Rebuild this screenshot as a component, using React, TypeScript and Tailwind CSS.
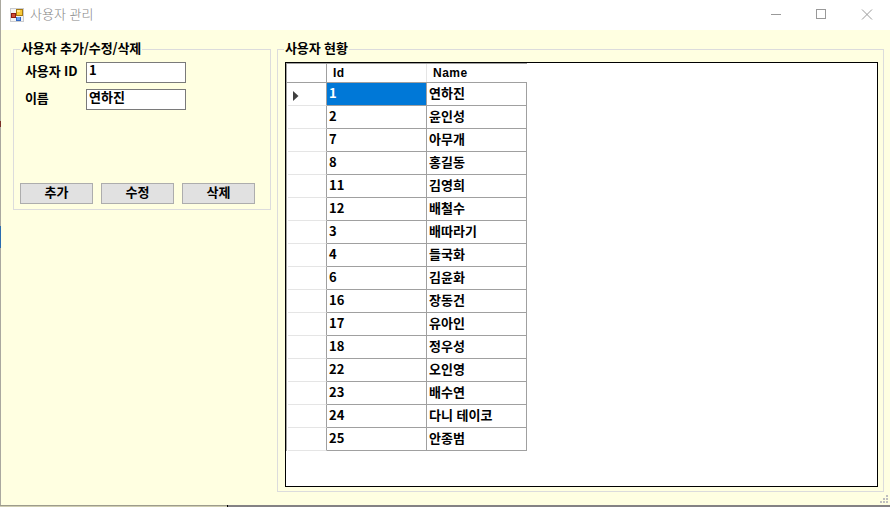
import React from "react";

const users: [number, string][] = [
  [1, "연하진"],
  [2, "윤인성"],
  [7, "아무개"],
  [8, "홍길동"],
  [11, "김영희"],
  [12, "배철수"],
  [3, "배따라기"],
  [4, "들국화"],
  [6, "김윤화"],
  [16, "장동건"],
  [17, "유아인"],
  [18, "정우성"],
  [22, "오인영"],
  [23, "배수연"],
  [24, "다니 테이코"],
  [25, "안종범"],
];

function FormIcon() {
  return (
    <svg width="14" height="14" viewBox="0 0 14 14" shapeRendering="crispEdges">
      <rect width="14" height="14" fill="#c9cbd0" />
      <rect x="1" y="1" width="12" height="12" fill="#f4f4f4" />
      <rect x="1" y="5" width="5" height="5" fill="#8c1a12" />
      <rect x="2" y="6" width="3" height="3" fill="#cf4a35" />
      <rect x="6" y="1" width="7" height="7" fill="#a87a10" />
      <rect x="7" y="2" width="5" height="5" fill="#f8c93a" />
      <rect x="7" y="2" width="3" height="2" fill="#ffe48a" />
      <rect x="6" y="9" width="5" height="4" fill="#3569c4" />
      <rect x="7" y="9" width="3" height="3" fill="#6ba0ee" />
    </svg>
  );
}

function TitleBar() {
  return (
    <header className="flex h-[30px] items-center bg-white pl-[9px] pr-[17px]">
      <FormIcon />
      <span className="-mt-[2px] ml-[6px] grow text-[13px] font-light leading-[18px] text-[#858585]">
        사용자 관리
      </span>
      <svg width="102" height="12" viewBox="0 0 102 12" fill="none" stroke="#999999">
        <path d="M0 5.5h10" />
        <rect x="45.5" y="0.5" width="9" height="9" />
        <path d="M91 0.5l10 10M101 0.5l-10 10" />
      </svg>
    </header>
  );
}

function Group({ title, className, children }: { title: string; className: string; children: React.ReactNode }) {
  return (
    <section className={`flex flex-col border border-[#dcdcdc] ${className}`}>
      <h2 className="-mt-[10px] ml-[6px] h-[18px] self-start bg-[#ffffe1] px-px text-[13px] font-bold leading-[15px] tracking-[-0.1px]">
        {title}
      </h2>
      {children}
    </section>
  );
}

function Field({ label, value }: { label: string; value: string }) {
  return (
    <label className="flex h-[21px]">
      <span className="w-[61px] leading-[17px] tracking-[-0.1px]">{label}</span>
      <span className="w-[100px] border border-[#7a7a7a] bg-white pl-[2px] leading-[14px]">{value}</span>
    </label>
  );
}

function UserGrid() {
  return (
    <div className="ml-[7px] mr-[5px] mt-[4px] h-[425px] border border-black bg-white">
      <div className="w-[241px] border-l border-t border-[#a0a0a0]">
        <div className="flex h-[19px] border-b border-[#a0a0a0] font-['Liberation_Sans',sans-serif] text-[12px] leading-[18px] tracking-[0.5px]">
          <div className="w-[40px] border-r border-[#a0a0a0]" />
          <div className="w-[100px] border-r border-[#e5e5e5] pl-[6px]">Id</div>
          <div className="w-[100px] pl-[6px]">Name</div>
        </div>
        {users.map(([id, name], i) => (
          <div key={id} className="flex h-[23px] leading-[19px]">
            <div className="ml-px flex w-[39px] items-center border-b border-r border-b-[#e5e5e5] border-r-[#a0a0a0] pl-[5px]">
              {i === 0 && (
                <svg width="6" height="10" viewBox="0 0 6 10" className="mt-[3px]">
                  <path d="M0 0l5.5 5L0 10z" fill="#404040" />
                </svg>
              )}
            </div>
            <div
              className={`w-[100px] border-b border-r border-[#a0a0a0] pl-[2px] ${
                i === 0 ? "bg-[#0078d7] text-white" : ""
              }`}
            >
              {id}
            </div>
            <div className="w-[100px] border-b border-r border-[#a0a0a0] pl-[2px]">{name}</div>
          </div>
        ))}
      </div>
    </div>
  );
}

function BackgroundEdge() {
  return (
    <div className="flex w-px flex-col bg-[#aaa89f]">
      <div className="mt-[121px] h-[6px] bg-[#7a3028]" />
      <div className="mt-[99px] h-[22px] bg-[#2a6cb0]" />
    </div>
  );
}

export default function App() {
  return (
    <div
      lang="ko"
      className="flex h-[507px] w-[890px] flex-col overflow-hidden bg-[#ffffe1] font-['Noto_Sans_CJK_KR',sans-serif] text-[13px] text-black"
    >
      <div className="flex h-[505px]">
        <BackgroundEdge />
        <div className="grow">
          <TitleBar />
          <main className="relative flex h-[475px] items-start gap-[6px] pl-[12px] pt-[19px] font-bold">
            <Group title="사용자 추가/수정/삭제" className="h-[161px] w-[258px]">
              <div className="mt-[4px] flex flex-col gap-[6px] pl-[11px]">
                <Field label="사용자 ID" value="1" />
                <Field label="이름" value="연하진" />
              </div>
              <div className="mt-[73px] flex gap-[8px] pl-[6px]">
                {["추가", "수정", "삭제"].map((text) => (
                  <button
                    key={text}
                    className="flex h-[21px] w-[73px] justify-center border border-[#adadad] bg-[#e1e1e1] leading-[16px]"
                  >
                    {text}
                  </button>
                ))}
              </div>
            </Group>
            <Group title="사용자 현황" className="h-[443px] w-[607px]">
              <UserGrid />
            </Group>
            <svg
              className="absolute bottom-[2px] right-[2px]"
              width="8"
              height="8"
              viewBox="0 0 8 8"
              fill="#bfbfbf"
              shapeRendering="crispEdges"
            >
              <path d="M6 0h2v2H6zM3 3h2v2H3zM6 3h2v2H6zM0 6h2v2H0zM3 6h2v2H3zM6 6h2v2H6z" />
            </svg>
          </main>
        </div>
      </div>
      <div className="flex h-[2px]">
        <div className="w-[227px] border-t border-[#9d9c8c] bg-[#cfcdb2]" />
        <div className="w-px bg-black" />
        <div className="grow bg-[#848284]" />
      </div>
    </div>
  );
}
